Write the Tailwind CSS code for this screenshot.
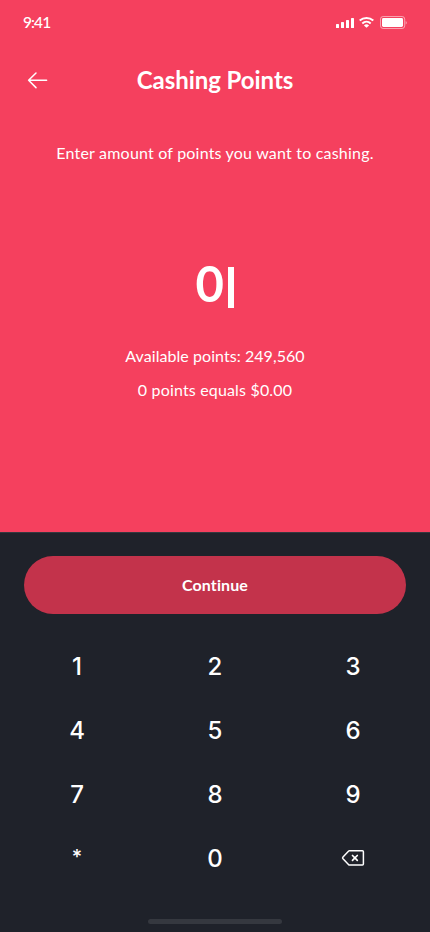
<!DOCTYPE html>
<html lang="en">
<head>
<meta charset="utf-8">
<meta name="viewport" content="width=device-width, initial-scale=1">
<title>Cashing Points</title>
<script src="https://cdn.jsdelivr.net/npm/@tailwindcss/browser@4"></script>
</head>
<body class="h-[932px] w-[430px] overflow-hidden bg-[#1f222a] font-[Lato,sans-serif] text-white">
<main class="flex h-full flex-col">
  <section class="flex h-[532px] flex-col bg-[#f5405e]">
    <div class="flex h-11 items-center justify-between pl-[23px] pr-[23px]">
      <span class="pb-px text-[15.5px] leading-5 font-medium tracking-[-0.9px]">9:41</span>
      <svg class="h-[14px] w-[72px]" viewBox="0 0 72 14" fill="none">
        <g fill="#fff">
          <rect x="1" y="9" width="3" height="4" rx=".6"/>
          <rect x="6" y="7" width="3" height="6" rx=".6"/>
          <rect x="11" y="5" width="3" height="8" rx=".6"/>
          <rect x="16" y="3" width="3" height="10" rx=".6"/>
        </g>
        <path d="M24.7 5.5a10.3 10.3 0 0 1 13.6 0M27.3 8.4a6.3 6.3 0 0 1 8.4 0" stroke="#fff" stroke-width="2"/>
        <path d="M31.5 12.7 28.9 10.4a3.9 3.9 0 0 1 5.2 0Z" fill="#fff"/>
        <rect x="45.5" y="1.5" width="24.2" height="12" rx="2.6" stroke="#fff" stroke-opacity=".5"/>
        <rect x="47" y="3.1" width="21" height="8.8" rx="1.4" fill="#fff"/>
        <path d="M70.7 6v3.6a2 2 0 0 0 0-3.6Z" fill="#fff" fill-opacity=".5"/>
      </svg>
    </div>
    <header class="grid h-[72px] grid-cols-[48px_1fr_48px] items-center px-[14px]">
      <svg class="h-6 w-[48px]" viewBox="0 0 48 24" fill="none" stroke="#fff" stroke-width="1.5" stroke-linecap="round" stroke-linejoin="round"><path d="M32.6 12.3H14.6M22 5l-7.4 7.3 7.4 7.3"/></svg>
      <h1 class="text-center text-2xl font-bold whitespace-nowrap tracking-[-0.05px]">Cashing Points</h1>
    </header>
    <p class="mt-[25px] text-center text-base leading-6 tracking-[0.2px]">Enter amount of points you want to cashing.</p>
    <div class="mt-[85px] flex h-[70px] items-center justify-center gap-[4px] pr-px text-[49px] font-bold">
      <span class="w-[28px] -translate-y-px text-center">0</span><span class="mt-[5px] h-[41px] w-[6px] bg-white"></span>
    </div>
    <p class="mt-[24px] text-center text-base leading-6 tracking-[0.06px]">Available points: 249,560</p>
    <p class="mt-[10px] text-center text-base leading-6 tracking-[0.17px]">0 points equals $0.00</p>
  </section>
  <section class="flex flex-1 flex-col border-t border-[#35383f] px-6 pt-[23px]">
    <button class="h-[58px] shrink-0 rounded-full bg-[#c3334b] text-base font-bold tracking-[0.1px]">Continue</button>
    <div class="mt-[21px] grid grid-cols-[106px_170px_106px] auto-rows-[64px] place-items-center font-[Inter,sans-serif] text-2xl font-medium">
      <span>1</span><span>2</span><span>3</span>
      <span>4</span><span>5</span><span>6</span>
      <span>7</span><span>8</span><span>9</span>
      <span class="pb-[5px] text-xl">*</span><span>0</span>
      <svg class="-mt-0.5 h-6 w-6" viewBox="0 0 24 24" fill="none" stroke="#fff" stroke-width="1.5" stroke-linejoin="round" stroke-linecap="round"><path d="M8.4 4.7H21.4a1 1 0 0 1 1 1V18a1 1 0 0 1-1 1H8.4a1 1 0 0 1-.7-.3L2 12.8a1.4 1.4 0 0 1 0-1.9L7.7 5a1 1 0 0 1 .7-.3Z"/><path d="m11.5 9.5 4.8 4.8m0-4.8-4.8 4.8" stroke-width="1.7"/></svg>
    </div>
    <div class="mt-auto mb-2 h-[5px] w-[134px] shrink-0 self-center rounded-full bg-[#35383f]"></div>
  </section>
</main>
</body>
</html>
